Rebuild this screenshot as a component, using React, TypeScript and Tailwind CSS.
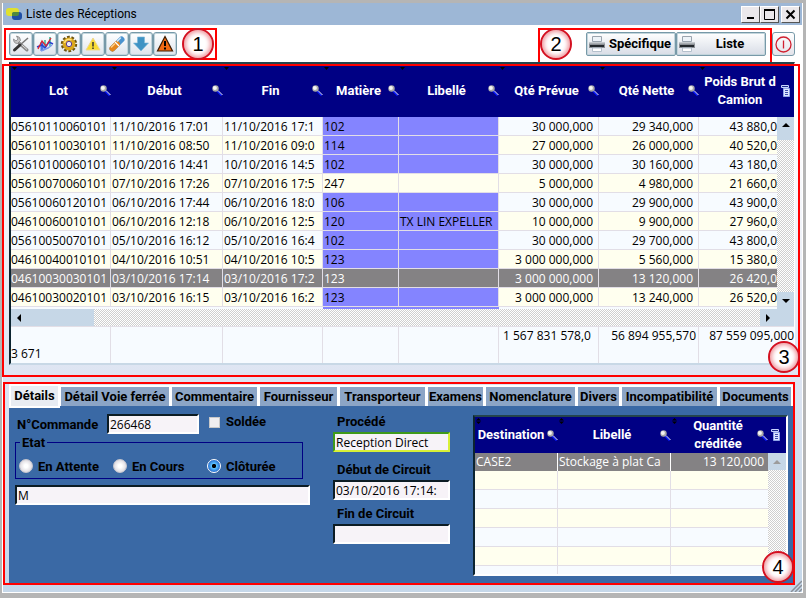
import { useState, type ReactNode } from "react";
import clsx from "clsx";

const LOTS = [
  ["05610110060101", "11/10/2016 17:01", "11/10/2016 17:1", "102", "", "30 000,000", "29 340,000", "43 880,0"],
  ["05610110030101", "11/10/2016 08:50", "11/10/2016 09:0", "114", "", "27 000,000", "26 000,000", "40 520,0"],
  ["05610100060101", "10/10/2016 14:41", "10/10/2016 14:5", "102", "", "30 000,000", "30 160,000", "43 180,0"],
  ["05610070060101", "07/10/2016 17:26", "07/10/2016 17:5", "247", "", "5 000,000", "4 980,000", "21 660,0"],
  ["05610060120101", "06/10/2016 17:44", "06/10/2016 18:0", "106", "", "30 000,000", "29 900,000", "43 900,0"],
  ["04610060010101", "06/10/2016 12:18", "06/10/2016 12:5", "120", "TX LIN EXPELLER", "10 000,000", "9 900,000", "27 960,0"],
  ["05610050070101", "05/10/2016 16:12", "05/10/2016 16:4", "102", "", "30 000,000", "29 700,000", "43 800,0"],
  ["04610040010101", "04/10/2016 10:51", "04/10/2016 10:5", "123", "", "3 000 000,000", "5 560,000", "15 380,0"],
  ["04610030030101", "03/10/2016 17:14", "03/10/2016 17:2", "123", "", "3 000 000,000", "13 120,000", "26 420,0"],
  ["04610030020101", "03/10/2016 16:15", "03/10/2016 16:2", "123", "", "3 000 000,000", "13 240,000", "26 520,0"],
];

const COLUMNS = ["Lot", "Début", "Fin", "Matière", "Libellé", "Qté Prévue", "Qté Nette"];

const TABS = [
  { label: "Détail Voie ferrée", width: "w-[111px]" },
  { label: "Commentaire", width: "w-[88px]" },
  { label: "Fournisseur", width: "w-[80px]" },
  { label: "Transporteur", width: "w-[88px]" },
  { label: "Examens", width: "w-[58px]" },
  { label: "Nomenclature", width: "w-[92px]" },
  { label: "Divers", width: "w-[44px]" },
  { label: "Incompatibilité", width: "w-[98px]" },
  { label: "Documents", width: "w-[74px]" },
];

const BOLD = "font-[Roboto,sans-serif] text-[13px] font-bold";
const TRACK = "bg-[repeating-conic-gradient(#cfcfcf_0_25%,#fff_0_50%)] bg-[length:2px_2px]";
const FIELD =
  "h-5 min-w-0 border-2 border-t-[#0c1c24] border-r-white border-b-white border-l-[#0c1c24] bg-[#f7f3f8] px-px text-xs text-black outline-none";

function Magnifier() {
  return (
    <button type="button" aria-label="Rechercher" className="block w-[11px] shrink-0">
      <svg viewBox="0 0 11 11" className="size-[11px]">
        <path d="M5 6l4.500 4.500" stroke="#0a1cff" strokeWidth="1.600" />
        <path d="M6 5.500l4.500 4.500" stroke="#e4e6ff" strokeWidth="1" />
        <circle cx="3.500" cy="3.500" r="3.200" fill="#a9a9a9" />
        <circle cx="2.900" cy="2.900" r="2" fill="#f4f4f4" />
      </svg>
    </button>
  );
}

function SortMark({ both = false }: { both?: boolean }) {
  return (
    <svg viewBox="0 0 5 6" className="absolute top-px left-px h-1.5 w-[5px]" aria-hidden="true">
      {both ? <path d="M0 2.500L2.500 0L5 2.500zM0 3.500L2.500 6L5 3.500z" fill="#000" /> : <path d="M0 0h5v1h-5zM0 2h5L2.500 5z" fill="#000" />}
    </svg>
  );
}

function ColumnsIcon() {
  return (
    <svg viewBox="0 0 9 12" className="h-3 w-[9px] shrink-0" aria-hidden="true">
      <path d="M.5.500h7v2h-7z" fill="#1c2a8c" stroke="#c9d4ff" />
      <path d="M2.500 3.500h6v8h-6z" fill="#dfe6ff" stroke="#8fa4e8" />
      <path d="M4 5.500h3M4 7.500h3M4 9.500h3" stroke="#3c4fae" />
    </svg>
  );
}

function Arrow({ dir, muted = false }: { dir: "up" | "down" | "left" | "right"; muted?: boolean }) {
  const paths = {
    up: "M0 6L4 2L8 6z",
    down: "M0 2L4 6L8 2z",
    left: "M6 0L2 4L6 8z",
    right: "M2 0L6 4L2 8z",
  };
  return (
    <svg viewBox="0 0 8 8" className="size-2" aria-hidden="true">
      <path d={paths[dir]} fill={muted ? "#9c9c9c" : "#000"} />
    </svg>
  );
}

function Badge({ n, className }: { n: number; className?: string }) {
  return (
    <span
      className={clsx(
        "flex size-8 shrink-0 items-center justify-center rounded-full border-2 border-[#d41020] bg-white font-['Liberation_Sans',sans-serif] text-xl text-black shadow-[inset_0_0_4px_2px_#ef9aa0]",
        className,
      )}
    >
      {n}
    </span>
  );
}

function HeaderCell({ label, first = false, both = false }: { label: string; first?: boolean; both?: boolean }) {
  return (
    <th scope="col" className="relative p-0 font-bold">
      <SortMark both={both} />
      <div className={clsx("flex items-center", first ? "pl-0" : "pl-1.5")}>
        <span className="flex-1 text-center">{label}</span>
        <Magnifier />
      </div>
    </th>
  );
}

function ToolButton({ label, children }: { label: string; children: ReactNode }) {
  return (
    <button
      type="button"
      aria-label={label}
      className="flex size-6 items-center justify-center rounded-[3px] border border-[#7799a8] bg-linear-to-b from-white to-[#dfe5ec] shadow-[inset_0_0_0_1px_#c3d5dc]"
    >
      <svg viewBox="0 0 18 18" className="size-[18px]" fill="none" aria-hidden="true">
        {children}
      </svg>
    </button>
  );
}

function PrintButton({ label }: { label: string }) {
  return (
    <button
      type="button"
      className={clsx(
        BOLD,
        "flex h-6 w-[90px] items-center rounded-[2px] border border-[#7799a8] bg-linear-to-b from-white to-[#d8dde6] pl-0.5 text-black shadow-[inset_0_0_0_1px_#c3d5dc]",
      )}
    >
      <svg viewBox="0 0 16 16" className="size-4 shrink-0" aria-hidden="true">
        <path d="M3.500.500h9v5h-9z" fill="#eef3f8" stroke="#9aa4ae" />
        <path d="M0 6h16v6h-16z" fill="#8b9095" />
        <path d="M0 6h16v1.500h-16z" fill="#c5cace" />
        <path d="M1 9h14v2h-14z" fill="#23282c" />
        <path d="M3.500 12h9v3.500h-9z" fill="#fff" stroke="#b4c0cc" />
      </svg>
      <span className="flex-1 text-center">{label}</span>
    </button>
  );
}

function TitleBar() {
  const btn =
    "flex h-[17px] w-[19px] items-center justify-center border border-t-white border-r-[#555] border-b-[#555] border-l-white bg-[#ebe8eb]";
  return (
    <header className="flex h-[22px] items-center bg-[#9db7d6] pr-0.5 pl-[3px]">
      <svg viewBox="0 0 18 13" className="h-[13px] w-[18px]" aria-hidden="true">
        <rect x="0" y="0" width="13" height="8" rx="3" fill="#dfe02e" />
        <rect x="6" y="4" width="10" height="8" rx="3" fill="#1f4fa5" />
        <path d="M6 8V6q0-2 2-2h5v2q0 2-2 2z" fill="#4f8a3e" />
      </svg>
      <h1 className="ml-0.5 flex-1 font-[Roboto,sans-serif] text-xs text-black">Liste des Réceptions</h1>
      <div className="flex">
        <button type="button" aria-label="Réduire" className={btn}>
          <svg viewBox="0 0 11 11" className="size-[11px]">
            <path d="M2 9h7" stroke="#000" strokeWidth="2" />
          </svg>
        </button>
        <button type="button" aria-label="Agrandir" className={btn}>
          <svg viewBox="0 0 11 11" className="size-[11px]" fill="none">
            <path d="M.5 1.500h10v9h-10z" stroke="#000" />
            <path d="M0 1h11" stroke="#000" strokeWidth="2" />
          </svg>
        </button>
        <button type="button" aria-label="Fermer" className={clsx(btn, "ml-0.5")}>
          <svg viewBox="0 0 11 11" className="size-[11px]">
            <path d="M1.500 1.500l8 8M9.500 1.500l-8 8" stroke="#000" strokeWidth="2" />
          </svg>
        </button>
      </div>
    </header>
  );
}

function Toolbar() {
  return (
    <div className="flex items-start justify-between pt-[3px] pr-[7px] pl-px">
      <div className="flex h-8 items-center border-2 border-[#f00] pr-px pl-[3px]">
        <ToolButton label="Outils">
          <path d="M7 8l8 7" stroke="#8a8a8a" strokeWidth="3" strokeLinecap="round" />
          <path d="M7.500 8l7.500 6.500" stroke="#ddd" strokeWidth="1" />
          <path d="M16 3L8 10" stroke="#777" strokeWidth="1.500" />
          <path d="M8 10l-5.500 5" stroke="#333" strokeWidth="3" strokeLinecap="round" />
          <path d="M1.500 4q0 4.500 4 4.500l3-3q0-4-4-4.500l1.500 3l-2 2z" fill="#c4c4c4" stroke="#777" strokeWidth=".7" />
        </ToolButton>
        <ToolButton label="Graphique">
          <path d="M9 5v8M14 2v9" stroke="#5fc9b0" strokeWidth="2" />
          <path d="M6 7v9" stroke="#4a7be0" strokeWidth="3" />
          <path d="M1 12l5-2l3 3l4-6l4 2" stroke="#2a3fd0" strokeWidth="1.500" />
          <path d="M2 14l4-8l4 5l5-8" stroke="#dc2430" strokeWidth="1.300" />
          <path d="M5 16l7-3l4-3" stroke="#7c9ae8" strokeWidth="1.500" />
        </ToolButton>
        <ToolButton label="Paramètres">
          <circle cx="9" cy="9" r="6.800" stroke="#6b5310" strokeWidth="2.800" strokeDasharray="2.700 1.570" />
          <circle cx="9" cy="9" r="4.600" stroke="#dba81c" strokeWidth="3.600" />
          <path d="M4.500 8a4.600 4.600 0 0 1 7-3" stroke="#ffe27a" strokeWidth="1.500" />
          <circle cx="9" cy="9" r="2.700" fill="#efeaf7" stroke="#5b3b86" />
        </ToolButton>
        <ToolButton label="Avertissement">
          <path d="M9 3l7 12h-14z" fill="#f8dc33" stroke="#efd890" strokeLinejoin="round" />
          <path d="M9 7v4.500M9 12.500v1.500" stroke="#333" strokeWidth="1.500" />
        </ToolButton>
        <ToolButton label="Gomme">
          <path d="M4.500 13.500l9-9" stroke="#4b93cf" strokeWidth="6" strokeLinecap="round" />
          <path d="M4.500 13.500l4.500-4.500" stroke="#e5871c" strokeWidth="6" strokeLinecap="round" />
          <path d="M7 7l4 4" stroke="#fff" strokeWidth="1.300" />
          <path d="M3.500 12l3-3" stroke="#ffd08a" strokeWidth="1.500" strokeLinecap="round" />
          <path d="M9.500 6l3-3" stroke="#cfe8fb" strokeWidth="1.500" strokeLinecap="round" />
        </ToolButton>
        <ToolButton label="Descendre">
          <path d="M5.500 2h7v6h4l-7.500 8l-7.500-8h4z" fill="#3f93c4" stroke="#79b6d8" strokeWidth=".6" />
        </ToolButton>
        <ToolButton label="Alerte">
          <path d="M9 1.500l7.500 14.500h-15z" fill="#f26a12" stroke="#3a1a00" strokeWidth="1.200" />
          <path d="M9 6v5M9 12.500v2" stroke="#000" strokeWidth="2" />
        </ToolButton>
        <Badge n={1} className="ml-[5px]" />
      </div>
      <div className="flex">
        <div className="flex h-[39px] items-start border-2 border-b-0 border-[#f00] pr-1">
          <Badge n={2} className="-mt-0.5" />
          <div className="ml-[14px] flex pt-0.5">
            <PrintButton label="Spécifique" />
            <PrintButton label="Liste" />
          </div>
        </div>
        <button
          type="button"
          aria-label="Quitter"
          className="mt-1 flex h-6 w-[23px] items-center justify-center rounded-[3px] border border-[#7799a8] bg-linear-to-b from-white to-[#e3e3ea]"
        >
          <svg viewBox="0 0 17 17" className="size-[17px]" fill="none" aria-hidden="true">
            <circle cx="8.500" cy="8.500" r="7.500" stroke="#d02030" strokeWidth="1.300" />
            <path d="M8.500 4.500v8" stroke="#d02030" strokeWidth="1.300" />
          </svg>
        </button>
      </div>
    </div>
  );
}

function LotTable() {
  const [selected, setSelected] = useState(8);
  const line = "border-r border-b border-[#e2dee6]";

  return (
    <section className="relative -mt-[5px] pr-[7px] pb-[17px] pl-1.5">
      <div className="border-2 border-r border-t-[#24444c] border-r-white border-b-[#c8d8e6] border-l-[#0c2430]">
        <table className="w-full table-fixed border-separate border-spacing-0 text-xs leading-[18px] text-black">
          <colgroup>
            <col className="w-[100px]" />
            <col className="w-[112px]" />
            <col className="w-[100px]" />
            <col className="w-[76px]" />
            <col className="w-[100px]" />
            <col className="w-[100px]" />
            <col className="w-[100px]" />
            <col />
            <col className="w-[17px]" />
          </colgroup>
          <thead className={clsx(BOLD, "bg-[#000084] text-white")}>
            <tr className="h-[53px]">
              {COLUMNS.map((label) => (
                <HeaderCell key={label} label={label} />
              ))}
              <th scope="col" colSpan={2} className="relative p-0 font-bold">
                <SortMark />
                <div className="flex items-center">
                  <div className="flex-1 pl-1 whitespace-nowrap">
                    Poids Brut d
                    <br />
                    Camion
                  </div>
                  <div className="flex w-[17px] justify-center">
                    <ColumnsIcon />
                  </div>
                </div>
              </th>
            </tr>
          </thead>
          <tbody>
            {LOTS.map((row, i) => (
              <tr
                key={row[0]}
                onClick={() => setSelected(i)}
                className={clsx(i === selected ? "bg-[#848284] text-white" : i % 2 ? "bg-[#ffffef]" : "bg-[#f7fbff]")}
              >
                {row.map((value, c) => (
                  <td
                    key={c}
                    className={clsx(
                      "p-0",
                      c === 7 ? "border-b border-[#e2dee6]" : line,
                      (c === 3 || c === 4) && i !== 3 && i !== selected && "bg-[#8484ff]",
                    )}
                  >
                    <div
                      className={clsx(
                        "h-[18px] leading-5 whitespace-nowrap",
                        c > 0 && c < 5 && "pl-px",
                        c > 4 && "text-right",
                        (c === 5 || c === 6) && "pr-[5px]",
                      )}
                    >
                      {value}
                    </div>
                  </td>
                ))}
                {i === 0 && (
                  <td rowSpan={11} className="p-0">
                    <div className={clsx("flex h-48 flex-col justify-between", TRACK)}>
                      <button type="button" aria-label="Monter" className="flex h-[23px] items-start justify-center bg-[#c6d7e7] pt-1">
                        <Arrow dir="up" />
                      </button>
                      <button type="button" aria-label="Descendre" className="flex h-[17px] items-center justify-center bg-[#c6d7e7]">
                        <Arrow dir="down" />
                      </button>
                    </div>
                  </td>
                )}
              </tr>
            ))}
            <tr className="h-0.5 bg-[#f7fbff]">
              <td colSpan={3} className="p-0" />
              <td colSpan={2} className="bg-[#8484ff] p-0" />
              <td colSpan={3} className="p-0" />
            </tr>
            <tr>
              <td colSpan={9} className="p-0">
                <div className={clsx("flex h-[17px] justify-between", TRACK)}>
                  <button type="button" aria-label="Gauche" className="flex w-[83px] items-center bg-[#c6d7e7] pl-1">
                    <Arrow dir="left" />
                  </button>
                  <button type="button" aria-label="Droite" className="flex w-[34px] items-center bg-[#c6d7e7] pl-1">
                    <Arrow dir="right" />
                  </button>
                </div>
              </td>
            </tr>
          </tbody>
          <tfoot>
            <tr className="h-[37px] bg-[#f7fbff] align-top [&>td]:border-t [&>td]:border-[#e2dee6]">
              <td className="border-r p-0 align-bottom">3 671</td>
              <td className="border-r p-0" />
              <td className="border-r p-0" />
              <td className="border-r p-0" />
              <td className="border-r p-0" />
              <td className="border-r p-0 pl-1 whitespace-nowrap">1 567 831 578,0</td>
              <td className="border-r p-0 pr-0.5 text-right whitespace-nowrap">56 894 955,570</td>
              <td colSpan={2} className="p-0 text-right whitespace-nowrap">87 559 095,000</td>
            </tr>
          </tfoot>
        </table>
      </div>
      <div className="pointer-events-none absolute top-0.5 right-0.5 bottom-[5px] -left-px border-2 border-[#f00]">
        <Badge n={3} className="absolute -right-0.5 bottom-0.5" />
      </div>
    </section>
  );
}

function StockTable() {
  const empty = [0, 1, 2, 3, 4];
  return (
    <div className="mt-px ml-[23px] min-w-0 flex-1 self-start border-2 border-t-[#24444c] border-r-white border-b-white border-l-[#0c2430]">
      <table className="w-full table-fixed border-separate border-spacing-0 text-xs leading-[18px]">
        <colgroup>
          <col className="w-[83px]" />
          <col className="w-[113px]" />
          <col />
          <col className="w-[18px]" />
        </colgroup>
        <thead className={clsx(BOLD, "bg-[#000084] text-white")}>
          <tr className="h-9">
            <HeaderCell label="Destination" first both />
            <HeaderCell label="Libellé" both />
            <th scope="col" colSpan={2} className="relative p-0 font-bold">
              <SortMark both />
              <div className="flex items-center pr-1.5 pl-2">
                <span className="flex-1 text-center">
                  Quantité
                  <br />
                  créditée
                </span>
                <Magnifier />
                <div className="flex w-3 justify-end">
                  <ColumnsIcon />
                </div>
              </div>
            </th>
          </tr>
        </thead>
        <tbody>
          <tr className="bg-[#848284] text-white">
            <td className="h-[18px] border-r border-white p-0 pl-px">CASE2</td>
            <td className="border-r border-white p-0 pl-px whitespace-nowrap">Stockage à plat Ca</td>
            <td className="p-0 pr-1 text-right">13 120,000</td>
            <td rowSpan={7} className="p-0">
              <div className={clsx("h-[121px]", TRACK)}>
                <button type="button" aria-label="Monter" className="flex h-[17px] w-full items-center justify-center bg-[#c6d7e7]">
                  <Arrow dir="up" muted />
                </button>
              </div>
            </td>
          </tr>
          {empty.map((i) => (
            <tr key={i} className={i % 2 ? "bg-[#f7fbff]" : "bg-[#ffffef]"}>
              <td className="h-[19px] border-r border-b border-[#e2dee6] p-0" />
              <td className="border-r border-b border-[#e2dee6] p-0" />
              <td className="border-b border-[#e2dee6] p-0" />
            </tr>
          ))}
          <tr className="bg-[#f7fbff]">
            <td className="h-2 border-r border-[#e2dee6] p-0" />
            <td className="border-r border-[#e2dee6] p-0" />
            <td className="p-0" />
          </tr>
        </tbody>
      </table>
    </div>
  );
}

function Details() {
  const radio =
    "size-[14px] shrink-0 appearance-none rounded-full border border-[#c8c8d0] bg-[radial-gradient(circle,#fff_0_20%,#e0dde2_70%)] checked:border-white checked:bg-[radial-gradient(circle,#000_0_20%,#5cc0ff_30%,#1d62c8_75%)]";
  return (
    <div className="flex flex-1 bg-[#3a69a5] pt-2 pr-[5px] pl-1.5 text-black">
      <div className="w-[295px] shrink-0">
        <div className="flex items-center">
          <label htmlFor="commande" className={clsx(BOLD, "w-[92px] pt-px pl-0.5")}>N°Commande</label>
          <input id="commande" className={clsx(FIELD, "w-[92px]")} defaultValue="266468" />
          <label className={clsx(BOLD, "ml-2.5 flex items-center gap-1.5 self-start leading-4")}>
            <input type="checkbox" className="size-[11px] appearance-none border border-[#c8c8c8] bg-[#f0eef0] checked:bg-[#1d62c8]" />
            Soldée
          </label>
        </div>
        <fieldset className="mr-[7px] border border-[#000084] px-[3px] pt-1.5 pb-0.5">
          <legend className={clsx(BOLD, "ml-px px-0.5 leading-4")}>Etat</legend>
          <div className={clsx(BOLD, "flex")}>
            <label className="flex w-[94px] items-center gap-[5px]">
              <input type="radio" name="etat" className={radio} />
              En Attente
            </label>
            <label className="flex w-[94px] items-center gap-[5px]">
              <input type="radio" name="etat" className={radio} />
              En Cours
            </label>
            <label className="flex items-center gap-[5px]">
              <input type="radio" name="etat" className={radio} defaultChecked />
              Clôturée
            </label>
          </div>
        </fieldset>
        <input aria-label="Observation" className={clsx(FIELD, "mt-1.5 w-full")} defaultValue="M" />
      </div>
      <div className="ml-[23px] flex w-[117px] shrink-0 flex-col">
        <label htmlFor="procede" className={clsx(BOLD, "h-[18px] pl-1 leading-4")}>Procédé</label>
        <input
          id="procede"
          className="h-5 min-w-0 border-2 border-t-[#3f9a1c] border-r-[#d8f038] border-b-[#d8f038] border-l-[#3f9a1c] bg-[#f7f3f8] px-px text-xs outline-none"
          defaultValue="Reception Direct"
        />
        <label htmlFor="debut" className={clsx(BOLD, "mt-2 pl-1 leading-5")}>Début de Circuit</label>
        <input id="debut" className={FIELD} defaultValue="03/10/2016 17:14:" />
        <label htmlFor="fin" className={clsx(BOLD, "mt-1 pl-1 leading-5")}>Fin de Circuit</label>
        <input id="fin" className={FIELD} />
      </div>
      <StockTable />
    </div>
  );
}

export default function App() {
  return (
    <div className="flex min-h-screen flex-col bg-[#b5b5b5] pt-[3px] pr-[3px] pb-[5px] pl-0.5 font-['Open_Sans',sans-serif]">
      <main className="relative flex flex-1 flex-col border border-t-0 border-white bg-linear-to-b from-white from-20% via-[#e0e6f3] via-60% to-[#c5d7e9]">
        <TitleBar />
        <Toolbar />
        <LotTable />
        <section className="relative mr-[7px] flex flex-1 flex-col pt-0.5 pr-0.5 pb-[7px] pl-1.5">
          <nav role="tablist" className={clsx(BOLD, "flex h-[22px] items-end text-black")}>
            <button type="button" role="tab" aria-selected="true" className="relative z-10 h-6 w-[51px] self-start border-2 border-white bg-[#e8ecf2]">
              Détails
            </button>
            {TABS.map((tab) => (
              <button
                key={tab.label}
                type="button"
                role="tab"
                aria-selected="false"
                className={clsx("h-[21px] border-t-2 border-r-2 border-l border-white bg-[#8ca5c6] whitespace-nowrap", tab.width)}
              >
                {tab.label}
              </button>
            ))}
          </nav>
          <Details />
          <div className="pointer-events-none absolute top-0 right-0 bottom-[7px] left-0 z-20 border-2 border-[#f00]">
            <Badge n={4} className="absolute -right-px bottom-0" />
          </div>
        </section>
        <svg viewBox="0 0 12 12" className="absolute right-0 bottom-0 size-3" aria-hidden="true">
          <path d="M1 12L12 1M5 12L12 5M9 12L12 9" stroke="#8a9098" strokeWidth="1.500" />
        </svg>
      </main>
    </div>
  );
}
